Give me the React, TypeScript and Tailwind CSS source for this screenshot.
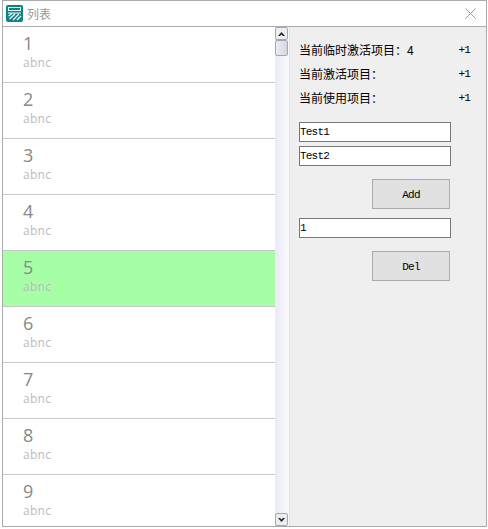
const rows = [1, 2, 3, 4, 5, 6, 7, 8, 9];
const stats = ['当前临时激活项目：4', '当前激活项目：', '当前使用项目：'];
const mono = "font-['Liberation_Mono','Noto_Sans_CJK_SC',monospace] text-[11px] tracking-[-0.8px] text-black";
const cjk = "font-['Noto_Sans_CJK_SC','Liberation_Mono',sans-serif] text-[12px] text-black";

const Logo = () => (
  <svg width="17" height="17" viewBox="0 0 17 17" fill="none">
    <rect x="0" y="0" width="17" height="17" rx="2" fill="#0a8585" />
    <rect x="2.5" y="2.5" width="12" height="3" fill="#0a8585" stroke="#f4fbfb" />
    <path d="M2 8h13M2.5 11 6 8.5M3.5 14 9 9M7 15l6-6M11 15l4-4" stroke="#f4fbfb" strokeWidth="1.2" />
  </svg>
);

const ScrollArrow = ({ up }: { up?: boolean }) => (
  <div className="flex h-[13px] w-[13px] items-center justify-center rounded-[2px] border border-[#a3a8b8] bg-[#eceef4]">
    <svg width="7" height="4" viewBox="0 0 7 4">
      <path d={up ? 'M0 4 3.5 0 7 4 5 4 3.5 2.5 2 4Z' : 'M0 0 3.5 4 7 0 5 0 3.5 1.5 2 0Z'} fill="#222" />
    </svg>
  </div>
);

const Field = ({ value }: { value: string }) => (
  <div className={`flex h-[20px] w-[152px] items-center border border-[#777] bg-white ${mono}`}>{value}</div>
);

const Button = ({ label }: { label: string }) => (
  <div className={`ml-[73px] flex h-[30px] w-[78px] items-center justify-center border border-[#aaa] bg-[#e1e1e1] pt-[2px] ${mono}`}>{label}</div>
);

export default function App() {
  return (
    <div className="h-[529px] w-[488px] overflow-hidden bg-white pl-[2px]">
      <div className="flex h-[527px] w-[485px] flex-col border border-[#aaa] bg-white">
        <div className="flex h-[26px] shrink-0 items-center border-b border-[#aaa] pl-[3px] pr-[10px]">
          <Logo />
          <span className="ml-[4px] font-['Noto_Sans_CJK_SC',sans-serif] text-[12px] text-[#999]">列表</span>
          <svg className="ml-auto" width="11" height="11" viewBox="0 0 11 11">
            <path d="M0.5 0.5 10.5 10.5M10.5 0.5 0.5 10.5" stroke="#999" strokeWidth="1" />
          </svg>
        </div>
        <div className="flex min-h-0 flex-1">
          <div className="w-[272px] overflow-hidden">
            {rows.map((n) => (
              <div
                key={n}
                className={`h-[56px] border-b border-[#c8c8c8] pl-[20px] pt-[4px] font-['Open_Sans',sans-serif] ${n === 5 ? 'bg-[#a6ffa6]' : 'bg-white'}`}
              >
                <div className="text-[18px] leading-[24px] text-[#888]">{n}</div>
                <div className="text-[12px] leading-[16px] tracking-[0.3px] text-[#bbb]">abnc</div>
              </div>
            ))}
          </div>
          <div className="flex w-[14px] shrink-0 flex-col bg-gradient-to-r from-[#e9ebf5] to-[#f9f9fd]">
            <ScrollArrow up />
            <div className="h-[16px] w-[13px] rounded-[2px] border border-[#a3a8b8] bg-gradient-to-r from-[#eceef4] to-[#d3d6e2]" />
            <div className="flex-1" />
            <ScrollArrow />
          </div>
          <div className="flex-1 border-l border-[#e2e2e2] bg-[#efefef] pl-[9px] pt-[13px]">
            <div className="flex flex-col gap-[4px]">
              {stats.map((s) => (
                <div key={s} className="flex h-[20px] w-[171px] items-center justify-between">
                  <span className={cjk}>{s}</span>
                  <span className={mono}>+1</span>
                </div>
              ))}
            </div>
            <div className="mt-[14px] flex flex-col gap-[4px]">
              <Field value="Test1" />
              <Field value="Test2" />
            </div>
            <div className="mt-[13px]">
              <Button label="Add" />
            </div>
            <div className="mt-[9px]">
              <Field value="1" />
            </div>
            <div className="mt-[13px]">
              <Button label="Del" />
            </div>
          </div>
        </div>
      </div>
    </div>
  );
}
